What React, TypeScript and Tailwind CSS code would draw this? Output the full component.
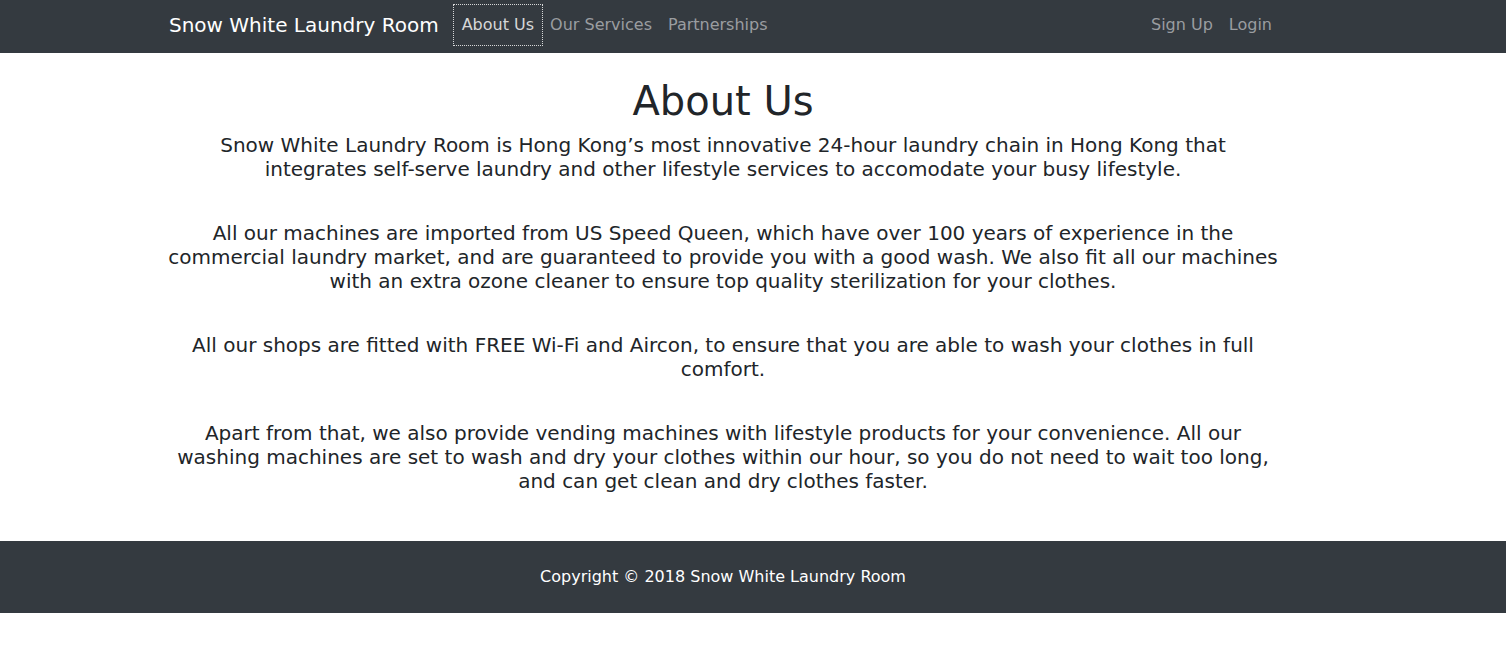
import React from 'react'

const paragraphs = [
  'Snow White Laundry Room is Hong Kong\u2019s most innovative 24-hour laundry chain in Hong Kong that integrates self-serve laundry and other lifestyle services to accomodate your busy lifestyle.',
  'All our machines are imported from US Speed Queen, which have over 100 years of experience in the commercial laundry market, and are guaranteed to provide you with a good wash. We also fit all our machines with an extra ozone cleaner to ensure top quality sterilization for your clothes.',
  'All our shops are fitted with FREE Wi-Fi and Aircon, to ensure that you are able to wash your clothes in full comfort.',
  'Apart from that, we also provide vending machines with lifestyle products for your convenience. All our washing machines are set to wash and dry your clothes within our hour, so you do not need to wait too long, and can get clean and dry clothes faster.',
]

const App: React.FC = () => {
  return (
    <div className="min-h-screen bg-white font-['DejaVu_Sans',sans-serif] text-[#212529]">
      <nav className="h-[53px] bg-[#343a40] pb-[3px]">
        <div className="ml-[153px] flex h-full w-[1140px] items-center pl-[16px] pr-[13px]">
          <a className="mr-[15px] text-[20px] leading-[30px] text-white">Snow White Laundry Room</a>
          <a className="px-2 py-[8px] text-[16px] leading-[24px] text-[#d6d7d8] outline-1 outline-dotted outline-[#d6d7d8]">
            About Us
          </a>
          <a className="px-2 py-[8px] text-[16px] leading-[24px] text-[#9a9da0]">Our Services</a>
          <a className="px-2 py-[8px] text-[16px] leading-[24px] text-[#9a9da0]">Partnerships</a>
          <div className="ml-auto flex">
            <a className="px-2 py-[8px] text-[16px] leading-[24px] text-[#9a9da0]">Sign Up</a>
            <a className="px-2 py-[8px] text-[16px] leading-[24px] text-[#9a9da0]">Login</a>
          </div>
        </div>
      </nav>
      <main className="ml-[153px] w-[1140px] px-[15px] pt-[24px] pb-[48px] text-center">
        <h1 className="mb-2 text-[40px] leading-[48px]">About Us</h1>
        <div className="flex flex-col gap-[40px]">
          {paragraphs.map((p) => (
            <p key={p} className="text-[20px] leading-[24px]">
              {p}
            </p>
          ))}
        </div>
      </main>
      <footer className="flex h-[72px] items-center bg-[#343a40]">
        <div className="ml-[153px] w-[1140px] px-[15px] text-center text-[16px] leading-[24px] text-white">
          Copyright &copy; 2018 Snow White Laundry Room
        </div>
      </footer>
    </div>
  )
}

export default App
